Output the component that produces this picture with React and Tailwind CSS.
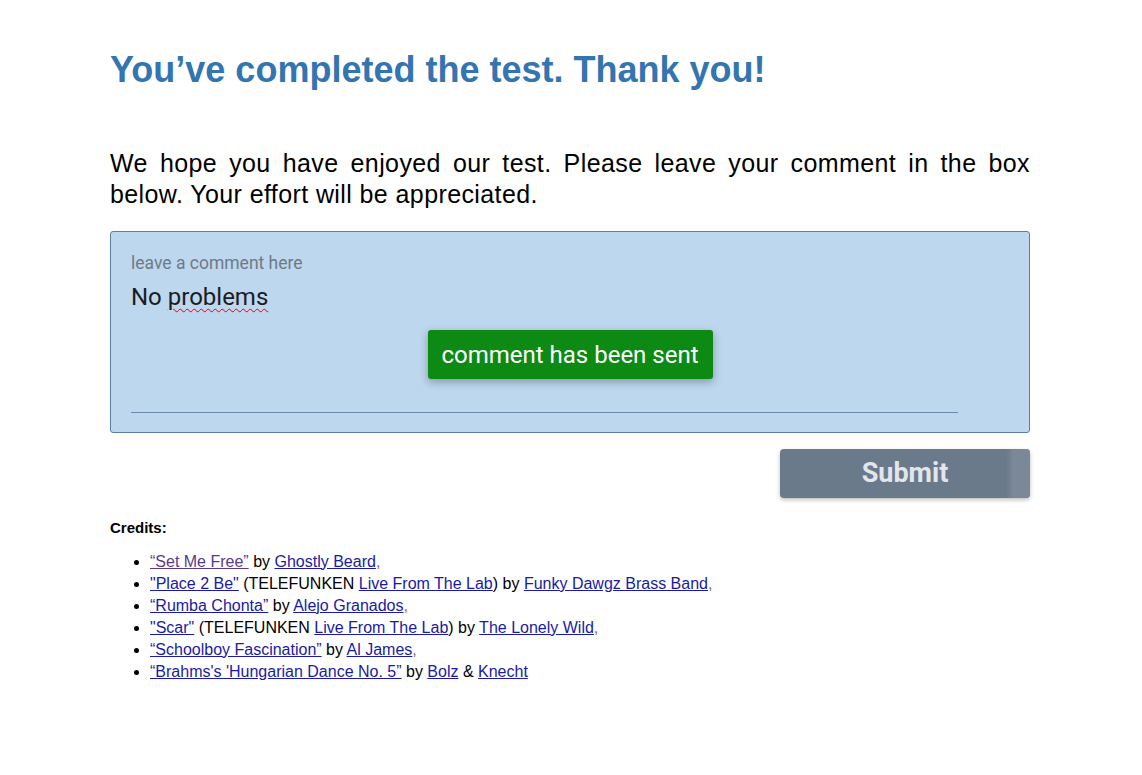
export default function App() {
    const link = "text-[#1a1aa6] underline";
    const comma = <span className="text-[#6a6aa8]">,</span>;

    return (
        <div className="min-h-[775px] bg-white font-['Liberation_Sans',Arial,sans-serif]">
            <div className="w-[920px] ml-[110px] pt-[48px]">
                <h1 className="text-[36px] leading-[44px] font-bold text-[#3375b0]">
                    You’ve completed the test. Thank you!
                </h1>

                <p className="mt-[56px] text-[25px] leading-[31px] tracking-[0.4px] text-black text-justify">
                    We hope you have enjoyed our test. Please leave your comment in the box below. Your effort will be appreciated.
                </p>

                <div className="mt-[21px] h-[202px] bg-[#bdd7ee] border border-[#5a7ea6] rounded-[3px] px-[20px] pt-[19px] font-['Roboto',sans-serif]">
                    <div className="text-[17.5px] leading-[24px] text-[#6f7a86]">leave a comment here</div>
                    <div className="mt-[8px] text-[24px] leading-[28px] text-[#1c1c24]">
                        No <span className="underline decoration-wavy decoration-red-600 decoration-[1px] underline-offset-[3px]">problems</span>
                    </div>
                    <div className="flex justify-center mt-[19px]">
                        <div className="h-[49px] w-[285px] bg-[#0d8a14] rounded-[3px] shadow-[0_3px_8px_rgba(0,0,0,0.3)] flex items-center justify-center text-white text-[24px]">
                            comment has been sent
                        </div>
                    </div>
                    <div className="mt-[33px] w-[827px] border-t border-[#6b89a8]"></div>
                </div>

                <div className="flex justify-end mt-[16px]">
                    <div className="relative overflow-hidden h-[49px] w-[250px] bg-[#6b7a8a] rounded-[4px] shadow-[0_2px_4px_rgba(0,0,0,0.25)] flex items-center justify-center font-['Roboto',sans-serif] font-bold text-[27px] text-[#e2e6ea]">
                        <span>Submit</span>
                        <div className="absolute right-0 top-0 bottom-0 w-[24px] bg-[linear-gradient(to_right,#6b7a8a,#7a8898_30%)]"></div>
                    </div>
                </div>

                <div className="mt-[19px] text-[15px] font-bold text-black">Credits:</div>
                <ul className="mt-[11px] pl-[40px] list-disc text-[16px] leading-[22px] text-black">
                    <li><a className="text-[#5a3a8a] underline">“Set Me Free”</a> by <a className={link}>Ghostly Beard</a>{comma}</li>
                    <li><a className={link}>"Place 2 Be"</a> (TELEFUNKEN <a className={link}>Live From The Lab</a>) by <a className={link}>Funky Dawgz Brass Band</a>{comma}</li>
                    <li><a className={link}>“Rumba Chonta”</a> by <a className={link}>Alejo Granados</a>{comma}</li>
                    <li><a className={link}>"Scar"</a> (TELEFUNKEN <a className={link}>Live From The Lab</a>) by <a className={link}>The Lonely Wild</a>{comma}</li>
                    <li><a className={link}>“Schoolboy Fascination”</a> by <a className={link}>Al James</a>{comma}</li>
                    <li><a className={link}>“Brahms's 'Hungarian Dance No. 5”</a> by <a className={link}>Bolz</a> &amp; <a className={link}>Knecht</a></li>
                </ul>
            </div>
        </div>
    );
}
